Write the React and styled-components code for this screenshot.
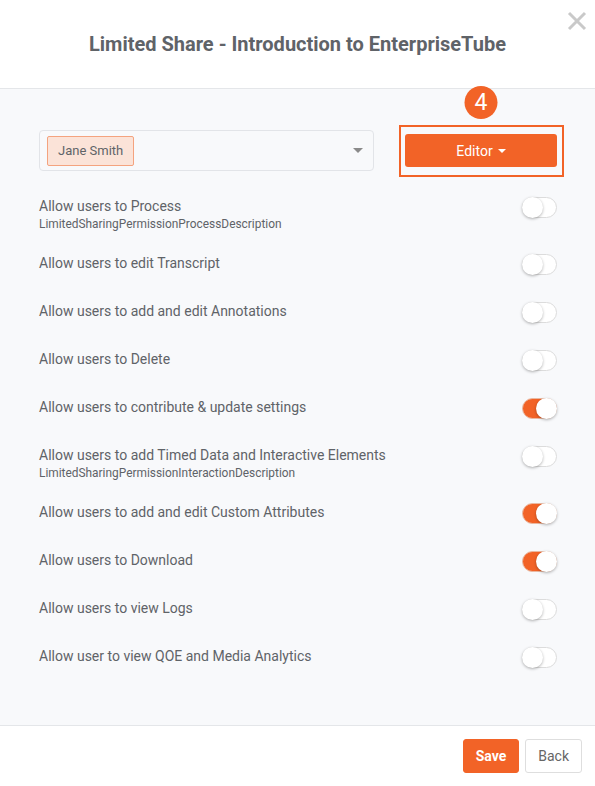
import styled, { createGlobalStyle } from 'styled-components'

const GlobalStyle = createGlobalStyle`
	html, body {
		margin: 0;
		padding: 0;
		background: #fff;
	}
	* {
		box-sizing: border-box;
	}
`

const orange = '#f26327'

const Dialog = styled.div`
	width: 595px;
	height: 786px;
	display: flex;
	flex-direction: column;
	font-family: Roboto, "Liberation Sans", sans-serif;
	color: #5f6368;
	background: #fff;
`

const Header = styled.div`
	position: relative;
	height: 89px;
	flex-shrink: 0;
	border-bottom: 1px solid #e4e6e9;
	display: flex;
	align-items: center;
	justify-content: center;
	padding-bottom: 1px;
`

const Title = styled.h2`
	margin: 0;
	font-size: 20px;
	font-weight: 700;
	color: #5f6368;
`

const Close = styled.button`
	position: absolute;
	top: 11px;
	right: 8px;
	width: 20px;
	height: 20px;
	padding: 0;
	border: none;
	background: none;
	cursor: pointer;
`

const Body = styled.div`
	flex: 1;
	background: #f8f9fb;
	padding: 41px 38px 0 39px;
`

const TopRow = styled.div`
	display: grid;
	grid-template-columns: 1fr 152px;
	column-gap: 31px;
	align-items: center;
	margin-bottom: 25px;
`

const Select = styled.div`
	height: 41px;
	border: 1px solid #e2e4e8;
	border-radius: 4px;
	display: flex;
	align-items: center;
	justify-content: space-between;
	padding: 0 10px 0 7px;
`

const Tag = styled.span`
	display: inline-flex;
	align-items: center;
	height: 30px;
	padding: 0 10px;
	background: #fbe3d8;
	border: 1px solid #f4a37f;
	border-radius: 2px;
	font-size: 13px;
	color: #5f6368;
`

const Caret = styled.span`
	width: 0;
	height: 0;
	border-left: 5px solid transparent;
	border-right: 5px solid transparent;
	border-top: 5px solid #8a8a8a;
`

const EditorWrap = styled.div`
	position: relative;

	&::after {
		content: '';
		position: absolute;
		top: -9px;
		bottom: -10px;
		left: -6px;
		right: -7px;
		border: 2px solid ${orange};
		pointer-events: none;
	}
`

const Badge = styled.span`
	position: absolute;
	top: -48px;
	left: 50%;
	transform: translateX(-50%);
	width: 33px;
	height: 33px;
	border-radius: 50%;
	background: ${orange};
	color: #fff;
	font-size: 23px;
	display: flex;
	align-items: center;
	justify-content: center;
`

const EditorButton = styled.button`
	width: 100%;
	height: 33px;
	border: none;
	border-radius: 3px;
	background: ${orange};
	color: #fff;
	font-family: inherit;
	font-size: 14px;
	display: flex;
	align-items: center;
	justify-content: center;
	gap: 5px;
	cursor: pointer;
`

const SmallCaret = styled.span`
	width: 0;
	height: 0;
	border-left: 4px solid transparent;
	border-right: 4px solid transparent;
	border-top: 4px solid #fff;
	margin-top: 1px;
`

const Row = styled.div`
	height: ${p => (p.tall ? 57 : 48)}px;
	display: flex;
	justify-content: space-between;
	align-items: flex-start;
`

const Label = styled.div`
	font-size: 14px;
	line-height: 20px;
	color: #5f6368;
`

const Desc = styled.div`
	font-size: 11.9px;
	line-height: 16px;
	color: #5f6368;
`

const Toggle = styled.span`
	position: relative;
	flex-shrink: 0;
	margin-top: 1px;
	width: 35px;
	height: 21px;
	border-radius: 11px;
	border: 1px solid ${p => (p.on ? '#e9b9a2' : '#dcdcdc')};
	background: ${p => (p.on ? orange : '#fff')};

	&::after {
		content: '';
		position: absolute;
		top: -1px;
		left: ${p => (p.on ? '13px' : '-1px')};
		width: 21px;
		height: 21px;
		border-radius: 50%;
		background: #fff;
		box-shadow: 0 1px 3px rgba(0, 0, 0, 0.3);
	}
`

const Footer = styled.div`
	height: 61px;
	flex-shrink: 0;
	border-top: 1px solid #e4e6e9;
	display: flex;
	align-items: center;
	justify-content: flex-end;
	gap: 6px;
	padding: 0 13px 0 0;
`

const FooterButton = styled.button`
	height: 34px;
	padding: 0 ${p => (p.primary ? 12 : 12)}px;
	border-radius: 3px;
	border: 1px solid ${p => (p.primary ? orange : '#dedede')};
	background: ${p => (p.primary ? orange : '#fff')};
	color: ${p => (p.primary ? '#fff' : '#666')};
	font-family: inherit;
	font-size: 14px;
	font-weight: ${p => (p.primary ? 700 : 400)};
	cursor: pointer;
`

const permissions = [
	{ label: 'Allow users to Process', desc: 'LimitedSharingPermissionProcessDescription', on: false },
	{ label: 'Allow users to edit Transcript', on: false },
	{ label: 'Allow users to add and edit Annotations', on: false },
	{ label: 'Allow users to Delete', on: false },
	{ label: 'Allow users to contribute & update settings', on: true },
	{ label: 'Allow users to add Timed Data and Interactive Elements', desc: 'LimitedSharingPermissionInteractionDescription', on: false },
	{ label: 'Allow users to add and edit Custom Attributes', on: true },
	{ label: 'Allow users to Download', on: true },
	{ label: 'Allow users to view Logs', on: false },
	{ label: 'Allow user to view QOE and Media Analytics', on: false },
]

function App() {
	return (
		<>
			<GlobalStyle />
			<Dialog>
				<Header>
					<Title>Limited Share - Introduction to EnterpriseTube</Title>
					<Close aria-label="Close">
						<svg width="20" height="20" viewBox="0 0 20 20">
							<path d="M2 2 L18 18 M18 2 L2 18" stroke="#c9c9c9" strokeWidth="3" />
						</svg>
					</Close>
				</Header>
				<Body>
					<TopRow>
						<Select>
							<Tag>Jane Smith</Tag>
							<Caret />
						</Select>
						<EditorWrap>
							<Badge>4</Badge>
							<EditorButton>
								Editor <SmallCaret />
							</EditorButton>
						</EditorWrap>
					</TopRow>
					{permissions.map(p => (
						<Row key={p.label} tall={!!p.desc}>
							<div>
								<Label>{p.label}</Label>
								{p.desc && <Desc>{p.desc}</Desc>}
							</div>
							<Toggle on={p.on} />
						</Row>
					))}
				</Body>
				<Footer>
					<FooterButton primary>Save</FooterButton>
					<FooterButton>Back</FooterButton>
				</Footer>
			</Dialog>
		</>
	)
}

export default App
